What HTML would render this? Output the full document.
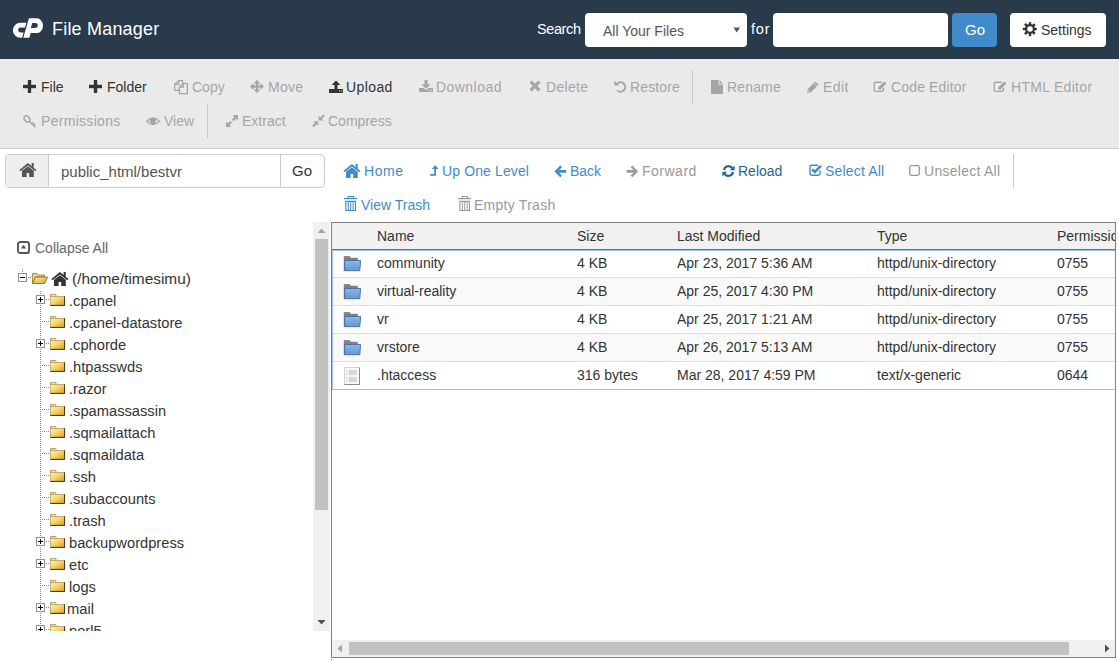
<!DOCTYPE html>
<html><head><meta charset="utf-8">
<style>
html,body{margin:0;padding:0;width:1119px;height:661px;overflow:hidden;background:#fff;font-family:"Liberation Sans",sans-serif;}
.a{position:absolute;white-space:nowrap;line-height:1;}
#hdr{position:absolute;left:0;top:0;width:1119px;height:59px;background:#293a4a;}
#tb{position:absolute;left:0;top:59px;width:1119px;height:89px;background:#eaeaea;border-bottom:1px solid #c6cbd0;}
.t{position:absolute;white-space:nowrap;line-height:1;font-size:14px;}
.dk{color:#333;}
.ds{color:#a5a5a5;}
.bl{color:#428bca;}
svg{position:absolute;overflow:visible;}
.sep{position:absolute;width:1px;background:#c9c9c9;}
</style></head><body>
<!-- HEADER -->
<div id="hdr">
  <svg style="left:0;top:0" width="60" height="59" viewBox="0 0 60 59">
    <path fill="#fff" d="M26.3 22.7 L20.4 22.7 A7.55 7.55 0 0 0 20.4 37.8 L22.1 37.8 L23.6 32.4 L20.6 32.4 A2.45 2.45 0 0 1 20.6 27.5 L25 27.5 Z"/>
    <path fill="#fff" fill-rule="evenodd" d="M28.9 18.2 L36.6 18.2 A6.4 7.45 0 0 1 36.6 33.1 L30.7 33.1 L29.4 37.8 L23.3 37.8 Z M32.2 23.1 L35.4 23.1 A2.45 2.45 0 0 1 35.4 28 L30.8 28 Z"/>
  </svg>
  <div class="a" style="left:52px;top:20px;font-size:18px;color:#fff;letter-spacing:0.2px;">File Manager</div>
  <div class="a" style="left:537px;top:22px;font-size:14.5px;color:#fff;letter-spacing:-0.4px;">Search</div>
  <div class="a" style="left:585px;top:13px;width:162px;height:34px;background:#fff;border-radius:4px;"></div>
  <div class="a" style="left:603px;top:24px;font-size:14px;color:#555;">All Your Files</div>
  <svg style="left:733px;top:27px" width="8" height="6"><path d="M0.5 0.5 L7 0.5 L3.75 5.5 Z" fill="#555"/></svg>
  <div class="a" style="left:751px;top:22px;font-size:14.5px;color:#fff;letter-spacing:0.8px;">for</div>
  <div class="a" style="left:773px;top:13px;width:175px;height:34px;background:#fff;border-radius:4px;"></div>
  <div class="a" style="left:952px;top:13px;width:45px;height:34px;background:#428bca;border-radius:4px;"></div>
  <div class="a" style="left:965px;top:21.5px;font-size:15px;color:#fff;">Go</div>
  <div class="a" style="left:1010px;top:13px;width:96px;height:34px;background:#fff;border-radius:4px;"></div>
  <svg style="left:1023px;top:22px" width="14" height="14" viewBox="0 0 14 14"><g fill="#333"><rect x="5.8" y="0.2" width="2.4" height="14" transform="rotate(0 7 7)"/><rect x="5.8" y="0.2" width="2.4" height="14" transform="rotate(45 7 7)"/><rect x="5.8" y="0.2" width="2.4" height="14" transform="rotate(90 7 7)"/><rect x="5.8" y="0.2" width="2.4" height="14" transform="rotate(135 7 7)"/><circle cx="7" cy="7" r="5"/></g><circle cx="7" cy="7" r="2.8" fill="#fff"/></svg>
  <div class="a" style="left:1041px;top:22.5px;font-size:14px;color:#333;">Settings</div>
</div>
<!-- TOOLBAR -->
<div id="tb"></div>
<div class="sep" style="left:692px;top:70px;height:34px;"></div>
<div class="sep" style="left:207px;top:104px;height:34px;"></div>
<svg style="left:23px;top:80px" width="13" height="13" viewBox="0 0 13 13"><g fill="#333"><rect x="4.8" y="0" width="3.4" height="13"/><rect x="0" y="4.8" width="13" height="3.4"/></g></svg>
<div class="t dk" style="left:41px;top:80px;font-size:14px">File</div>
<svg style="left:89px;top:80px" width="13" height="13" viewBox="0 0 13 13"><g fill="#333"><rect x="4.8" y="0" width="3.4" height="13"/><rect x="0" y="4.8" width="13" height="3.4"/></g></svg>
<div class="t dk" style="left:107px;top:80px;font-size:14px">Folder</div>
<svg style="left:174px;top:80px" width="14" height="14" viewBox="0 0 14 14"><g fill="none" stroke="#a5a5a5" stroke-width="1.25" stroke-linejoin="round"><path d="M5 10.3 L0.6 10.3 L0.6 4.4 L4.6 0.6 L8.5 0.6 L8.5 3.2"/><path d="M0.6 4.4 L4.6 4.4 L4.6 0.6"/><path d="M5.4 7.2 L9.4 3.3 L13.4 3.3 L13.4 13.5 L5.4 13.5 Z"/><path d="M5.4 7.2 L9.4 7.2 L9.4 3.3"/></g></svg>
<div class="t ds" style="left:192px;top:80px;font-size:14px">Copy</div>
<svg style="left:250px;top:80px" width="14" height="13" viewBox="0 0 14 13"><g fill="#a5a5a5"><rect x="5.8" y="2" width="2.4" height="9"/><rect x="2" y="5.3" width="10" height="2.4"/><path d="M7 0 L3.6 3.4 L10.4 3.4Z M7 13 L3.6 9.6 L10.4 9.6Z M0 6.5 L3.4 3.1 L3.4 9.9Z M14 6.5 L10.6 3.1 L10.6 9.9Z"/></g></svg>
<div class="t ds" style="left:268px;top:80px;font-size:14px;letter-spacing:0.3px">Move</div>
<svg style="left:329px;top:80px" width="14" height="13" viewBox="0 0 14 13"><g fill="#333"><path d="M7 0.5 L2.6 5 L5.5 5 L5.5 9.5 L8.5 9.5 L8.5 5 L11.4 5Z"/><rect x="0" y="9" width="14" height="4"/></g><rect x="10" y="10.5" width="1.2" height="1" fill="#eaeaea"/><rect x="12" y="10.5" width="1.2" height="1" fill="#eaeaea"/></svg>
<div class="t dk" style="left:346px;top:80px;font-size:14px;letter-spacing:0.4px">Upload</div>
<svg style="left:419px;top:80px" width="14" height="12" viewBox="0 0 14 12"><g fill="#a5a5a5"><path d="M5.5 0 L8.5 0 L8.5 4.3 L11.6 4.3 L7 8.8 L2.4 4.3 L5.5 4.3Z"/><path d="M0 8 L4.5 8 L7 10.3 L9.5 8 L14 8 L14 12 L0 12Z"/></g><rect x="9.8" y="9.8" width="1.2" height="1" fill="#eaeaea"/><rect x="11.8" y="9.8" width="1.2" height="1" fill="#eaeaea"/></svg>
<div class="t ds" style="left:436px;top:80px;font-size:14px;letter-spacing:0.45px">Download</div>
<svg style="left:529px;top:80px" width="12" height="12" viewBox="0 0 12 12"><g stroke="#a5a5a5" stroke-width="3.2"><path d="M1.6 1.6 L10.4 10.4 M10.4 1.6 L1.6 10.4"/></g></svg>
<div class="t ds" style="left:546px;top:80px;font-size:14px;letter-spacing:0.3px">Delete</div>
<svg style="left:614px;top:80px" width="13" height="13" viewBox="0 0 13 13"><path d="M3.2 3.6 A4.7 4.7 0 1 1 3.2 10.4" fill="none" stroke="#a5a5a5" stroke-width="2"/><path d="M0.4 0.8 L0.4 5.6 L5.2 5.6Z" fill="#a5a5a5"/></svg>
<div class="t ds" style="left:630px;top:80px;font-size:14px;letter-spacing:0.12px">Restore</div>
<svg style="left:711px;top:80px" width="12" height="14" viewBox="0 0 12 14"><g fill="#a5a5a5"><path d="M0 0 L7.6 0 L7.6 4.6 L12 4.6 L12 14 L0 14Z"/><path d="M8.6 0 L12 3.5 L8.6 3.5Z"/></g></svg>
<div class="t ds" style="left:727px;top:80px;font-size:14px;letter-spacing:0.15px">Rename</div>
<svg style="left:807px;top:81px" width="12" height="12" viewBox="0 0 12 12"><path fill="#a5a5a5" d="M0.1 12 L0.8 8.1 L8.3 0.6 L11.5 3.8 L4 11.3Z"/><path d="M6.9 2.0 L10.1 5.2" stroke="#eaeaea" stroke-width="0.8"/><path d="M1.2 10.8 L2 9" stroke="#eaeaea" stroke-width="0.7"/></svg>
<div class="t ds" style="left:823px;top:80px;font-size:14px;letter-spacing:0.4px">Edit</div>
<svg style="left:873px;top:81px" width="14" height="11" viewBox="0 0 14 11"><path d="M8.5 1.2 H3 Q1.2 1.2 1.2 3 V8.6 Q1.2 10.4 3 10.4 H8.6 Q10.4 10.4 10.4 8.6 V7" fill="none" stroke="#a5a5a5" stroke-width="1.4"/><path fill="#a5a5a5" d="M5 8.2 L5.4 6.2 L11.2 0.4 L13.4 2.6 L7.6 8.4Z"/></svg>
<div class="t ds" style="left:891px;top:80px;font-size:14px;letter-spacing:0.15px">Code Editor</div>
<svg style="left:993px;top:81px" width="14" height="11" viewBox="0 0 14 11"><path d="M8.5 1.2 H3 Q1.2 1.2 1.2 3 V8.6 Q1.2 10.4 3 10.4 H8.6 Q10.4 10.4 10.4 8.6 V7" fill="none" stroke="#a5a5a5" stroke-width="1.4"/><path fill="#a5a5a5" d="M5 8.2 L5.4 6.2 L11.2 0.4 L13.4 2.6 L7.6 8.4Z"/></svg>
<div class="t ds" style="left:1011px;top:80px;font-size:14px;letter-spacing:0.3px">HTML Editor</div>
<svg style="left:23px;top:115px" width="14" height="13" viewBox="0 0 14 13"><g fill="none" stroke="#a5a5a5" stroke-width="1.5"><ellipse cx="3.9" cy="3.9" rx="3.3" ry="2.5" transform="rotate(45 3.9 3.9)"/><path d="M5.9 6 L12.4 12.2 M9 9.1 L10.8 7.3 M10.6 10.6 L12.2 9"/></g></svg>
<div class="t ds" style="left:41px;top:114px;font-size:14px;letter-spacing:0.3px">Permissions</div>
<svg style="left:146px;top:116px" width="15" height="10" viewBox="0 0 15 10"><path d="M0.7 5.4 Q7.1 -1.4 13.6 5.4 Q7.1 11.6 0.7 5.4Z" fill="none" stroke="#a5a5a5" stroke-width="1.3"/><circle cx="6.9" cy="5" r="3" fill="#a5a5a5"/></svg>
<div class="t ds" style="left:164px;top:114px;font-size:14px">View</div>
<svg style="left:225px;top:114px" width="14" height="14" viewBox="0 0 14 14"><g fill="#a5a5a5"><path d="M7.6 1 L13 1 L13 6.4Z M1 7.6 L1 13 L6.4 13Z"/></g><g stroke="#a5a5a5" stroke-width="2.2"><path d="M10.6 3.4 L7.6 6.4 M3.4 10.6 L6.2 7.8"/></g></svg>
<div class="t ds" style="left:242px;top:114px;font-size:14px">Extract</div>
<svg style="left:312px;top:114px" width="14" height="14" viewBox="0 0 14 14"><g fill="#a5a5a5"><path d="M6.6 6.6 L6.6 1.8 L11.4 6.6Z M6.2 7.2 L1.4 7.2 L6.2 12Z"/></g><g stroke="#a5a5a5" stroke-width="2.2"><path d="M8.4 4.8 L12 1.2 M4.4 9 L1 12.4"/></g></svg>
<div class="t ds" style="left:328px;top:114px;font-size:14px">Compress</div>
<!-- NAV -->
<div class="a" style="left:5px;top:154px;width:318px;height:32px;border:1px solid #ccc;border-radius:4px;background:#fff;"></div>
<div class="a" style="left:6px;top:155px;width:42px;height:32px;background:#eee;border-right:1px solid #ccc;border-radius:3px 0 0 3px;"></div>
<div class="a" style="left:280px;top:155px;width:1px;height:32px;background:#ccc;"></div>
<svg style="left:19px;top:163px" width="18" height="14" viewBox="0 0 18 14"><polyline points="0.9,7.6 8.9,1.2 16.9,7.6" fill="none" stroke="#555" stroke-width="1.8"/><rect x="12.6" y="0" width="2.1" height="4.6" fill="#555"/><path fill="#555" d="M3 7.8 L8.9 3.2 L14.8 7.8 L14.8 13.9 L10.2 13.9 L10.2 9.9 L7.6 9.9 L7.6 13.9 L3 13.9 Z"/></svg>
<div class="t" style="left:61px;top:164px;font-size:15px;color:#555;">public_html/bestvr</div>
<div class="t" style="left:292px;top:163px;font-size:15px;color:#333;">Go</div>
<svg style="left:343px;top:164px" width="18" height="14" viewBox="0 0 18 14"><polyline points="0.9,7.6 8.9,1.2 16.9,7.6" fill="none" stroke="#428bca" stroke-width="1.8"/><rect x="12.6" y="0" width="2.1" height="4.6" fill="#428bca"/><path fill="#428bca" d="M3 7.8 L8.9 3.2 L14.8 7.8 L14.8 13.9 L10.2 13.9 L10.2 9.9 L7.6 9.9 L7.6 13.9 L3 13.9 Z"/></svg>
<div class="t" style="left:364px;top:164px;font-size:14px;color:#428bca;letter-spacing:0.6px;">Home</div>
<svg style="left:430px;top:165px" width="9" height="11" viewBox="0 0 9 11"><path fill="#428bca" d="M5.15 0 L8.4 4 L6 4 L6 10.8 L0.2 10.8 L0.2 9.1 L4.3 9.1 L4.3 4 L1.9 4Z"/></svg>
<div class="t" style="left:442px;top:164px;font-size:14px;color:#428bca;letter-spacing:0.12px;">Up One Level</div>
<svg style="left:554px;top:165px" width="13" height="13" viewBox="0 0 13 13"><path fill="#428bca" d="M0.5 6.4 L6.2 0.5 L8.0 2.3 L4.9 5.1 L12.1 5.1 L12.1 7.7 L4.9 7.7 L8.0 10.5 L6.2 12.3Z"/></svg>
<div class="t" style="left:570px;top:164px;font-size:14px;color:#428bca;">Back</div>
<svg style="left:626px;top:165px" width="13" height="13" viewBox="0 0 13 13"><path fill="#999" d="M12.1 6.4 L6.4 0.5 L4.6 2.3 L7.7 5.1 L0.5 5.1 L0.5 7.7 L7.7 7.7 L4.6 10.5 L6.4 12.3Z"/></svg>
<div class="t" style="left:642px;top:164px;font-size:14px;color:#999;letter-spacing:0.5px;">Forward</div>
<svg style="left:722px;top:165px" width="13" height="12" viewBox="0 0 13 12"><g fill="none" stroke="#2a6496" stroke-width="2.2"><path d="M2 5 A4.6 4.6 0 0 1 10.4 3.2"/><path d="M11 7 A4.6 4.6 0 0 1 2.6 8.8"/></g><path fill="#2a6496" d="M12.6 0.4 L12.6 5.2 L7.8 5.2Z M0.4 11.6 L0.4 6.8 L5.2 6.8Z"/></svg>
<div class="t" style="left:738px;top:164px;font-size:14px;color:#2a6496;">Reload</div>
<svg style="left:809px;top:164px" width="13" height="12" viewBox="0 0 13 12"><path d="M9 1.2 H2.6 Q1 1.2 1 2.8 V9.6 Q1 11.2 2.6 11.2 H9.4 Q11 11.2 11 9.6 V6.5" fill="none" stroke="#428bca" stroke-width="1.4"/><path fill="none" stroke="#428bca" stroke-width="2.6" d="M3.2 5.4 L5.8 8 L11.9 1.9"/></svg>
<div class="t" style="left:825px;top:164px;font-size:14px;color:#428bca;letter-spacing:0.18px;">Select All</div>
<svg style="left:909px;top:165px" width="11" height="11" viewBox="0 0 11 11"><rect x="0.7" y="0.7" width="9.6" height="9.6" rx="1.8" fill="none" stroke="#999" stroke-width="1.3"/></svg>
<div class="t" style="left:924px;top:164px;font-size:14px;color:#999;letter-spacing:0.27px;">Unselect All</div>
<div class="sep" style="left:1013px;top:154px;height:34px;background:#cbcbcb"></div>
<svg style="left:344px;top:196px" width="13" height="15" viewBox="0 0 13 15"><g fill="#428bca"><rect x="0" y="2" width="13" height="1.2"/><path fill-rule="evenodd" d="M3.6 0 H10.2 V2.2 H3.6Z M4.7 0.9 V2.2 H9.1 V0.9Z"/><path fill-rule="evenodd" d="M1.3 4.8 H12 V15 H1.3Z M2.4 5.9 V13.9 H3.8 V5.9Z M4.8 5.9 V13.9 H6.2 V5.9Z M7.2 5.9 V13.9 H8.6 V5.9Z M9.6 5.9 V13.9 H10.9 V5.9Z"/></g></svg>
<div class="t" style="left:361px;top:198px;font-size:14px;color:#428bca;">View Trash</div>
<svg style="left:458px;top:196px" width="13" height="15" viewBox="0 0 13 15"><g fill="#999"><rect x="0" y="2" width="13" height="1.2"/><path fill-rule="evenodd" d="M3.6 0 H10.2 V2.2 H3.6Z M4.7 0.9 V2.2 H9.1 V0.9Z"/><path fill-rule="evenodd" d="M1.3 4.8 H12 V15 H1.3Z M2.4 5.9 V13.9 H3.8 V5.9Z M4.8 5.9 V13.9 H6.2 V5.9Z M7.2 5.9 V13.9 H8.6 V5.9Z M9.6 5.9 V13.9 H10.9 V5.9Z"/></g></svg>
<div class="t" style="left:474px;top:198px;font-size:14px;color:#999;letter-spacing:0.26px;">Empty Trash</div>
<!-- TREE -->
<div id="tree" style="position:absolute;left:0;top:222px;width:313px;height:409px;overflow:hidden;">
<svg style="left:17px;top:19px" width="13" height="13" viewBox="0 0 13 13"><rect x="0.95" y="0.95" width="11.1" height="11.1" rx="2.4" fill="none" stroke="#555" stroke-width="1.9"/><path d="M6.5 3.8 L9.2 7.6 L3.8 7.6Z" fill="#555"/></svg>
<div class="t" style="left:35px;top:19px;font-size:14px;color:#666;">Collapse All</div>
<div class="a" style="left:22px;top:47px;width:1px;height:3px;background-image:repeating-linear-gradient(to bottom, #888 0 1px, transparent 1px 2px);"></div>
<svg style="left:18px;top:51px" width="9" height="9" viewBox="0 0 9 9"><rect x="0.5" y="0.5" width="8" height="8" fill="#fff" stroke="#909090"/><rect x="2" y="4" width="5" height="1" fill="#000"/></svg>
<div class="a" style="left:28px;top:55px;width:4px;height:1px;background-image:repeating-linear-gradient(to right, #888 0 1px, transparent 1px 2px);"></div>
<svg style="left:32px;top:50px" width="16" height="12" viewBox="0 0 16 12"><defs><linearGradient id="fo" x1="0" y1="0" x2="1" y2="1"><stop offset="0" stop-color="#fbe9a3"/><stop offset="1" stop-color="#e2a93a"/></linearGradient></defs><path d="M0.5 1.5 L5 1.5 L6.2 3 L12.5 3 L12.5 5 L3.5 5 L0.5 11.5Z" fill="#f3d37c" stroke="#9a7b3a" stroke-width="0.8"/><path d="M3.5 5 L15.5 5 L12.5 11.5 L0.5 11.5Z" fill="url(#fo)" stroke="#7a5a20" stroke-width="0.8"/></svg>
<svg style="left:51px;top:50px" width="18" height="14" viewBox="0 0 18 14"><polyline points="0.9,7.6 8.9,1.2 16.9,7.6" fill="none" stroke="#333" stroke-width="1.8"/><rect x="12.6" y="0" width="2.1" height="4.6" fill="#333"/><path fill="#333" d="M3 7.8 L8.9 3.2 L14.8 7.8 L14.8 13.9 L10.2 13.9 L10.2 9.9 L7.6 9.9 L7.6 13.9 L3 13.9 Z"/></svg>
<div class="t" style="left:72px;top:49px;font-size:15.4px;color:#333;">(/home/timesimu)</div>
<div class="a" style="left:40px;top:69px;width:1px;height:345px;background-image:repeating-linear-gradient(to bottom, #888 0 1px, transparent 1px 2px);"></div>
<svg style="left:36px;top:73px" width="9" height="9" viewBox="0 0 9 9"><rect x="0.5" y="0.5" width="8" height="8" fill="#fff" stroke="#909090"/><rect x="2" y="4" width="5" height="1" fill="#000"/><rect x="4" y="2" width="1" height="5" fill="#000"/></svg>
<div class="a" style="left:46px;top:77px;width:3px;height:1px;background-image:repeating-linear-gradient(to right, #888 0 1px, transparent 1px 2px);"></div>
<svg style="left:50px;top:72px" width="15" height="12" viewBox="0 0 15 12"><defs><linearGradient id="fc" x1="0" y1="0" x2="1" y2="1"><stop offset="0" stop-color="#fff6c4"/><stop offset="0.45" stop-color="#f5d568"/><stop offset="1" stop-color="#e0981f"/></linearGradient></defs><path d="M0.5 2.5 L0.5 0.5 L5.5 0.5 L6.5 2.2 L6.5 2.5Z" fill="#f3dd8e" stroke="#a88f4c" stroke-width="0.8"/><rect x="0.4" y="2.4" width="14.2" height="9.2" fill="url(#fc)" stroke="#b8a060" stroke-width="0.8"/><path d="M0.4 11.4 L14.6 11.4 L14.6 2.4" fill="none" stroke="#3f3210" stroke-width="1"/></svg>
<div class="t" style="left:69px;top:72px;font-size:14.7px;color:#333;">.cpanel</div>
<div class="a" style="left:42px;top:99px;width:7px;height:1px;background-image:repeating-linear-gradient(to right, #888 0 1px, transparent 1px 2px);"></div>
<svg style="left:50px;top:94px" width="15" height="12" viewBox="0 0 15 12"><defs><linearGradient id="fc" x1="0" y1="0" x2="1" y2="1"><stop offset="0" stop-color="#fff6c4"/><stop offset="0.45" stop-color="#f5d568"/><stop offset="1" stop-color="#e0981f"/></linearGradient></defs><path d="M0.5 2.5 L0.5 0.5 L5.5 0.5 L6.5 2.2 L6.5 2.5Z" fill="#f3dd8e" stroke="#a88f4c" stroke-width="0.8"/><rect x="0.4" y="2.4" width="14.2" height="9.2" fill="url(#fc)" stroke="#b8a060" stroke-width="0.8"/><path d="M0.4 11.4 L14.6 11.4 L14.6 2.4" fill="none" stroke="#3f3210" stroke-width="1"/></svg>
<div class="t" style="left:69px;top:94px;font-size:14.7px;color:#333;">.cpanel-datastore</div>
<svg style="left:36px;top:117px" width="9" height="9" viewBox="0 0 9 9"><rect x="0.5" y="0.5" width="8" height="8" fill="#fff" stroke="#909090"/><rect x="2" y="4" width="5" height="1" fill="#000"/><rect x="4" y="2" width="1" height="5" fill="#000"/></svg>
<div class="a" style="left:46px;top:121px;width:3px;height:1px;background-image:repeating-linear-gradient(to right, #888 0 1px, transparent 1px 2px);"></div>
<svg style="left:50px;top:116px" width="15" height="12" viewBox="0 0 15 12"><defs><linearGradient id="fc" x1="0" y1="0" x2="1" y2="1"><stop offset="0" stop-color="#fff6c4"/><stop offset="0.45" stop-color="#f5d568"/><stop offset="1" stop-color="#e0981f"/></linearGradient></defs><path d="M0.5 2.5 L0.5 0.5 L5.5 0.5 L6.5 2.2 L6.5 2.5Z" fill="#f3dd8e" stroke="#a88f4c" stroke-width="0.8"/><rect x="0.4" y="2.4" width="14.2" height="9.2" fill="url(#fc)" stroke="#b8a060" stroke-width="0.8"/><path d="M0.4 11.4 L14.6 11.4 L14.6 2.4" fill="none" stroke="#3f3210" stroke-width="1"/></svg>
<div class="t" style="left:69px;top:116px;font-size:14.7px;color:#333;">.cphorde</div>
<div class="a" style="left:42px;top:143px;width:7px;height:1px;background-image:repeating-linear-gradient(to right, #888 0 1px, transparent 1px 2px);"></div>
<svg style="left:50px;top:138px" width="15" height="12" viewBox="0 0 15 12"><defs><linearGradient id="fc" x1="0" y1="0" x2="1" y2="1"><stop offset="0" stop-color="#fff6c4"/><stop offset="0.45" stop-color="#f5d568"/><stop offset="1" stop-color="#e0981f"/></linearGradient></defs><path d="M0.5 2.5 L0.5 0.5 L5.5 0.5 L6.5 2.2 L6.5 2.5Z" fill="#f3dd8e" stroke="#a88f4c" stroke-width="0.8"/><rect x="0.4" y="2.4" width="14.2" height="9.2" fill="url(#fc)" stroke="#b8a060" stroke-width="0.8"/><path d="M0.4 11.4 L14.6 11.4 L14.6 2.4" fill="none" stroke="#3f3210" stroke-width="1"/></svg>
<div class="t" style="left:69px;top:138px;font-size:14.7px;color:#333;">.htpasswds</div>
<div class="a" style="left:42px;top:165px;width:7px;height:1px;background-image:repeating-linear-gradient(to right, #888 0 1px, transparent 1px 2px);"></div>
<svg style="left:50px;top:160px" width="15" height="12" viewBox="0 0 15 12"><defs><linearGradient id="fc" x1="0" y1="0" x2="1" y2="1"><stop offset="0" stop-color="#fff6c4"/><stop offset="0.45" stop-color="#f5d568"/><stop offset="1" stop-color="#e0981f"/></linearGradient></defs><path d="M0.5 2.5 L0.5 0.5 L5.5 0.5 L6.5 2.2 L6.5 2.5Z" fill="#f3dd8e" stroke="#a88f4c" stroke-width="0.8"/><rect x="0.4" y="2.4" width="14.2" height="9.2" fill="url(#fc)" stroke="#b8a060" stroke-width="0.8"/><path d="M0.4 11.4 L14.6 11.4 L14.6 2.4" fill="none" stroke="#3f3210" stroke-width="1"/></svg>
<div class="t" style="left:69px;top:160px;font-size:14.7px;color:#333;">.razor</div>
<div class="a" style="left:42px;top:187px;width:7px;height:1px;background-image:repeating-linear-gradient(to right, #888 0 1px, transparent 1px 2px);"></div>
<svg style="left:50px;top:182px" width="15" height="12" viewBox="0 0 15 12"><defs><linearGradient id="fc" x1="0" y1="0" x2="1" y2="1"><stop offset="0" stop-color="#fff6c4"/><stop offset="0.45" stop-color="#f5d568"/><stop offset="1" stop-color="#e0981f"/></linearGradient></defs><path d="M0.5 2.5 L0.5 0.5 L5.5 0.5 L6.5 2.2 L6.5 2.5Z" fill="#f3dd8e" stroke="#a88f4c" stroke-width="0.8"/><rect x="0.4" y="2.4" width="14.2" height="9.2" fill="url(#fc)" stroke="#b8a060" stroke-width="0.8"/><path d="M0.4 11.4 L14.6 11.4 L14.6 2.4" fill="none" stroke="#3f3210" stroke-width="1"/></svg>
<div class="t" style="left:69px;top:182px;font-size:14.7px;color:#333;">.spamassassin</div>
<div class="a" style="left:42px;top:209px;width:7px;height:1px;background-image:repeating-linear-gradient(to right, #888 0 1px, transparent 1px 2px);"></div>
<svg style="left:50px;top:204px" width="15" height="12" viewBox="0 0 15 12"><defs><linearGradient id="fc" x1="0" y1="0" x2="1" y2="1"><stop offset="0" stop-color="#fff6c4"/><stop offset="0.45" stop-color="#f5d568"/><stop offset="1" stop-color="#e0981f"/></linearGradient></defs><path d="M0.5 2.5 L0.5 0.5 L5.5 0.5 L6.5 2.2 L6.5 2.5Z" fill="#f3dd8e" stroke="#a88f4c" stroke-width="0.8"/><rect x="0.4" y="2.4" width="14.2" height="9.2" fill="url(#fc)" stroke="#b8a060" stroke-width="0.8"/><path d="M0.4 11.4 L14.6 11.4 L14.6 2.4" fill="none" stroke="#3f3210" stroke-width="1"/></svg>
<div class="t" style="left:69px;top:204px;font-size:14.7px;color:#333;">.sqmailattach</div>
<div class="a" style="left:42px;top:231px;width:7px;height:1px;background-image:repeating-linear-gradient(to right, #888 0 1px, transparent 1px 2px);"></div>
<svg style="left:50px;top:226px" width="15" height="12" viewBox="0 0 15 12"><defs><linearGradient id="fc" x1="0" y1="0" x2="1" y2="1"><stop offset="0" stop-color="#fff6c4"/><stop offset="0.45" stop-color="#f5d568"/><stop offset="1" stop-color="#e0981f"/></linearGradient></defs><path d="M0.5 2.5 L0.5 0.5 L5.5 0.5 L6.5 2.2 L6.5 2.5Z" fill="#f3dd8e" stroke="#a88f4c" stroke-width="0.8"/><rect x="0.4" y="2.4" width="14.2" height="9.2" fill="url(#fc)" stroke="#b8a060" stroke-width="0.8"/><path d="M0.4 11.4 L14.6 11.4 L14.6 2.4" fill="none" stroke="#3f3210" stroke-width="1"/></svg>
<div class="t" style="left:69px;top:226px;font-size:14.7px;color:#333;">.sqmaildata</div>
<div class="a" style="left:42px;top:253px;width:7px;height:1px;background-image:repeating-linear-gradient(to right, #888 0 1px, transparent 1px 2px);"></div>
<svg style="left:50px;top:248px" width="15" height="12" viewBox="0 0 15 12"><defs><linearGradient id="fc" x1="0" y1="0" x2="1" y2="1"><stop offset="0" stop-color="#fff6c4"/><stop offset="0.45" stop-color="#f5d568"/><stop offset="1" stop-color="#e0981f"/></linearGradient></defs><path d="M0.5 2.5 L0.5 0.5 L5.5 0.5 L6.5 2.2 L6.5 2.5Z" fill="#f3dd8e" stroke="#a88f4c" stroke-width="0.8"/><rect x="0.4" y="2.4" width="14.2" height="9.2" fill="url(#fc)" stroke="#b8a060" stroke-width="0.8"/><path d="M0.4 11.4 L14.6 11.4 L14.6 2.4" fill="none" stroke="#3f3210" stroke-width="1"/></svg>
<div class="t" style="left:69px;top:248px;font-size:14.7px;color:#333;">.ssh</div>
<div class="a" style="left:42px;top:275px;width:7px;height:1px;background-image:repeating-linear-gradient(to right, #888 0 1px, transparent 1px 2px);"></div>
<svg style="left:50px;top:270px" width="15" height="12" viewBox="0 0 15 12"><defs><linearGradient id="fc" x1="0" y1="0" x2="1" y2="1"><stop offset="0" stop-color="#fff6c4"/><stop offset="0.45" stop-color="#f5d568"/><stop offset="1" stop-color="#e0981f"/></linearGradient></defs><path d="M0.5 2.5 L0.5 0.5 L5.5 0.5 L6.5 2.2 L6.5 2.5Z" fill="#f3dd8e" stroke="#a88f4c" stroke-width="0.8"/><rect x="0.4" y="2.4" width="14.2" height="9.2" fill="url(#fc)" stroke="#b8a060" stroke-width="0.8"/><path d="M0.4 11.4 L14.6 11.4 L14.6 2.4" fill="none" stroke="#3f3210" stroke-width="1"/></svg>
<div class="t" style="left:69px;top:270px;font-size:14.7px;color:#333;">.subaccounts</div>
<div class="a" style="left:42px;top:297px;width:7px;height:1px;background-image:repeating-linear-gradient(to right, #888 0 1px, transparent 1px 2px);"></div>
<svg style="left:50px;top:292px" width="15" height="12" viewBox="0 0 15 12"><defs><linearGradient id="fc" x1="0" y1="0" x2="1" y2="1"><stop offset="0" stop-color="#fff6c4"/><stop offset="0.45" stop-color="#f5d568"/><stop offset="1" stop-color="#e0981f"/></linearGradient></defs><path d="M0.5 2.5 L0.5 0.5 L5.5 0.5 L6.5 2.2 L6.5 2.5Z" fill="#f3dd8e" stroke="#a88f4c" stroke-width="0.8"/><rect x="0.4" y="2.4" width="14.2" height="9.2" fill="url(#fc)" stroke="#b8a060" stroke-width="0.8"/><path d="M0.4 11.4 L14.6 11.4 L14.6 2.4" fill="none" stroke="#3f3210" stroke-width="1"/></svg>
<div class="t" style="left:69px;top:292px;font-size:14.7px;color:#333;">.trash</div>
<svg style="left:36px;top:315px" width="9" height="9" viewBox="0 0 9 9"><rect x="0.5" y="0.5" width="8" height="8" fill="#fff" stroke="#909090"/><rect x="2" y="4" width="5" height="1" fill="#000"/><rect x="4" y="2" width="1" height="5" fill="#000"/></svg>
<div class="a" style="left:46px;top:319px;width:3px;height:1px;background-image:repeating-linear-gradient(to right, #888 0 1px, transparent 1px 2px);"></div>
<svg style="left:50px;top:314px" width="15" height="12" viewBox="0 0 15 12"><defs><linearGradient id="fc" x1="0" y1="0" x2="1" y2="1"><stop offset="0" stop-color="#fff6c4"/><stop offset="0.45" stop-color="#f5d568"/><stop offset="1" stop-color="#e0981f"/></linearGradient></defs><path d="M0.5 2.5 L0.5 0.5 L5.5 0.5 L6.5 2.2 L6.5 2.5Z" fill="#f3dd8e" stroke="#a88f4c" stroke-width="0.8"/><rect x="0.4" y="2.4" width="14.2" height="9.2" fill="url(#fc)" stroke="#b8a060" stroke-width="0.8"/><path d="M0.4 11.4 L14.6 11.4 L14.6 2.4" fill="none" stroke="#3f3210" stroke-width="1"/></svg>
<div class="t" style="left:69px;top:314px;font-size:14.7px;color:#333;">backupwordpress</div>
<svg style="left:36px;top:337px" width="9" height="9" viewBox="0 0 9 9"><rect x="0.5" y="0.5" width="8" height="8" fill="#fff" stroke="#909090"/><rect x="2" y="4" width="5" height="1" fill="#000"/><rect x="4" y="2" width="1" height="5" fill="#000"/></svg>
<div class="a" style="left:46px;top:341px;width:3px;height:1px;background-image:repeating-linear-gradient(to right, #888 0 1px, transparent 1px 2px);"></div>
<svg style="left:50px;top:336px" width="15" height="12" viewBox="0 0 15 12"><defs><linearGradient id="fc" x1="0" y1="0" x2="1" y2="1"><stop offset="0" stop-color="#fff6c4"/><stop offset="0.45" stop-color="#f5d568"/><stop offset="1" stop-color="#e0981f"/></linearGradient></defs><path d="M0.5 2.5 L0.5 0.5 L5.5 0.5 L6.5 2.2 L6.5 2.5Z" fill="#f3dd8e" stroke="#a88f4c" stroke-width="0.8"/><rect x="0.4" y="2.4" width="14.2" height="9.2" fill="url(#fc)" stroke="#b8a060" stroke-width="0.8"/><path d="M0.4 11.4 L14.6 11.4 L14.6 2.4" fill="none" stroke="#3f3210" stroke-width="1"/></svg>
<div class="t" style="left:69px;top:336px;font-size:14.7px;color:#333;">etc</div>
<div class="a" style="left:42px;top:363px;width:7px;height:1px;background-image:repeating-linear-gradient(to right, #888 0 1px, transparent 1px 2px);"></div>
<svg style="left:50px;top:358px" width="15" height="12" viewBox="0 0 15 12"><defs><linearGradient id="fc" x1="0" y1="0" x2="1" y2="1"><stop offset="0" stop-color="#fff6c4"/><stop offset="0.45" stop-color="#f5d568"/><stop offset="1" stop-color="#e0981f"/></linearGradient></defs><path d="M0.5 2.5 L0.5 0.5 L5.5 0.5 L6.5 2.2 L6.5 2.5Z" fill="#f3dd8e" stroke="#a88f4c" stroke-width="0.8"/><rect x="0.4" y="2.4" width="14.2" height="9.2" fill="url(#fc)" stroke="#b8a060" stroke-width="0.8"/><path d="M0.4 11.4 L14.6 11.4 L14.6 2.4" fill="none" stroke="#3f3210" stroke-width="1"/></svg>
<div class="t" style="left:69px;top:358px;font-size:14.7px;color:#333;">logs</div>
<svg style="left:36px;top:381px" width="9" height="9" viewBox="0 0 9 9"><rect x="0.5" y="0.5" width="8" height="8" fill="#fff" stroke="#909090"/><rect x="2" y="4" width="5" height="1" fill="#000"/><rect x="4" y="2" width="1" height="5" fill="#000"/></svg>
<div class="a" style="left:46px;top:385px;width:3px;height:1px;background-image:repeating-linear-gradient(to right, #888 0 1px, transparent 1px 2px);"></div>
<svg style="left:50px;top:380px" width="15" height="12" viewBox="0 0 15 12"><defs><linearGradient id="fc" x1="0" y1="0" x2="1" y2="1"><stop offset="0" stop-color="#fff6c4"/><stop offset="0.45" stop-color="#f5d568"/><stop offset="1" stop-color="#e0981f"/></linearGradient></defs><path d="M0.5 2.5 L0.5 0.5 L5.5 0.5 L6.5 2.2 L6.5 2.5Z" fill="#f3dd8e" stroke="#a88f4c" stroke-width="0.8"/><rect x="0.4" y="2.4" width="14.2" height="9.2" fill="url(#fc)" stroke="#b8a060" stroke-width="0.8"/><path d="M0.4 11.4 L14.6 11.4 L14.6 2.4" fill="none" stroke="#3f3210" stroke-width="1"/></svg>
<div class="t" style="left:67px;top:380px;font-size:14.7px;color:#333;">mail</div>
<svg style="left:36px;top:403px" width="9" height="9" viewBox="0 0 9 9"><rect x="0.5" y="0.5" width="8" height="8" fill="#fff" stroke="#909090"/><rect x="2" y="4" width="5" height="1" fill="#000"/><rect x="4" y="2" width="1" height="5" fill="#000"/></svg>
<div class="a" style="left:46px;top:407px;width:3px;height:1px;background-image:repeating-linear-gradient(to right, #888 0 1px, transparent 1px 2px);"></div>
<svg style="left:50px;top:402px" width="15" height="12" viewBox="0 0 15 12"><defs><linearGradient id="fc" x1="0" y1="0" x2="1" y2="1"><stop offset="0" stop-color="#fff6c4"/><stop offset="0.45" stop-color="#f5d568"/><stop offset="1" stop-color="#e0981f"/></linearGradient></defs><path d="M0.5 2.5 L0.5 0.5 L5.5 0.5 L6.5 2.2 L6.5 2.5Z" fill="#f3dd8e" stroke="#a88f4c" stroke-width="0.8"/><rect x="0.4" y="2.4" width="14.2" height="9.2" fill="url(#fc)" stroke="#b8a060" stroke-width="0.8"/><path d="M0.4 11.4 L14.6 11.4 L14.6 2.4" fill="none" stroke="#3f3210" stroke-width="1"/></svg>
<div class="t" style="left:69px;top:402px;font-size:14.7px;color:#333;">perl5</div>
</div>
<div class="a" style="left:313px;top:222px;width:17px;height:409px;background:#f0f0f0;"></div>
<div class="a" style="left:315px;top:239px;width:13px;height:271px;background:#c1c1c1;"></div>
<svg style="left:317px;top:228px" width="9" height="6" viewBox="0 0 9 6"><path d="M4.5 0.5 L8.5 5 L0.5 5Z" fill="#a3a3a3"/></svg>
<svg style="left:317px;top:619px" width="9" height="6" viewBox="0 0 9 6"><path d="M4.5 5.5 L8.5 1 L0.5 1Z" fill="#505050"/></svg>
<!-- TABLE -->
<div class="a" style="left:331px;top:222px;width:783px;height:434px;border:1px solid #808080;background:#fff;overflow:hidden;">
<div class="a" style="left:0;top:0;width:783px;height:26px;background:#f1f1f1;border-bottom:1px solid #6f6f6f;"></div>
<div class="t" style="left:45px;top:6px;font-size:14px;color:#333;">Name</div>
<div class="t" style="left:245px;top:6px;font-size:14px;color:#333;">Size</div>
<div class="t" style="left:345px;top:6px;font-size:14px;color:#333;">Last Modified</div>
<div class="t" style="left:545px;top:6px;font-size:14px;color:#333;">Type</div>
<div class="t" style="left:725px;top:6px;font-size:14px;color:#333;">Permissions</div>

<div class="a" style="left:1px;top:27px;width:782px;height:27px;background:#fff;"></div>
<div class="a" style="left:1px;top:54px;width:782px;height:1px;background:#ddd;"></div>
<svg style="left:11px;top:33px" width="18" height="16" viewBox="0 0 18 16"><defs><linearGradient id="bf" x1="0" y1="0" x2="0" y2="1"><stop offset="0" stop-color="#8fb5e4"/><stop offset="1" stop-color="#6896d2"/></linearGradient><linearGradient id="bg2" x1="0" y1="0" x2="0" y2="1"><stop offset="0" stop-color="#8a8a8a"/><stop offset="1" stop-color="#5a5a5a"/></linearGradient></defs><path d="M0.8 0 L6.8 0 L7.7 1.8 L14.8 1.8 L14.8 5 L2.4 5 L2.4 14.8 L0.8 14.8Z" fill="url(#bg2)"/><path d="M1.6 4.5 L17.6 4.5 L16.8 14.7 L1.6 14.7Z" fill="url(#bf)" stroke="#3c6eb0" stroke-width="0.9" stroke-linejoin="round"/></svg>
<div class="t" style="left:45px;top:33px;font-size:14px;color:#333;">community</div>
<div class="t" style="left:245px;top:33px;font-size:14px;color:#333;">4 KB</div>
<div class="t" style="left:345px;top:33px;font-size:14px;color:#333;">Apr 23, 2017 5:36 AM</div>
<div class="t" style="left:545px;top:33px;font-size:14px;color:#333;">httpd/unix-directory</div>
<div class="t" style="left:725px;top:33px;font-size:14px;color:#333;">0755</div>
<div class="a" style="left:1px;top:55px;width:782px;height:27px;background:#f9f9f9;"></div>
<div class="a" style="left:1px;top:82px;width:782px;height:1px;background:#ddd;"></div>
<svg style="left:11px;top:61px" width="18" height="16" viewBox="0 0 18 16"><defs><linearGradient id="bf" x1="0" y1="0" x2="0" y2="1"><stop offset="0" stop-color="#8fb5e4"/><stop offset="1" stop-color="#6896d2"/></linearGradient><linearGradient id="bg2" x1="0" y1="0" x2="0" y2="1"><stop offset="0" stop-color="#8a8a8a"/><stop offset="1" stop-color="#5a5a5a"/></linearGradient></defs><path d="M0.8 0 L6.8 0 L7.7 1.8 L14.8 1.8 L14.8 5 L2.4 5 L2.4 14.8 L0.8 14.8Z" fill="url(#bg2)"/><path d="M1.6 4.5 L17.6 4.5 L16.8 14.7 L1.6 14.7Z" fill="url(#bf)" stroke="#3c6eb0" stroke-width="0.9" stroke-linejoin="round"/></svg>
<div class="t" style="left:45px;top:61px;font-size:14px;color:#333;">virtual-reality</div>
<div class="t" style="left:245px;top:61px;font-size:14px;color:#333;">4 KB</div>
<div class="t" style="left:345px;top:61px;font-size:14px;color:#333;">Apr 25, 2017 4:30 PM</div>
<div class="t" style="left:545px;top:61px;font-size:14px;color:#333;">httpd/unix-directory</div>
<div class="t" style="left:725px;top:61px;font-size:14px;color:#333;">0755</div>
<div class="a" style="left:1px;top:83px;width:782px;height:27px;background:#fff;"></div>
<div class="a" style="left:1px;top:110px;width:782px;height:1px;background:#ddd;"></div>
<svg style="left:11px;top:89px" width="18" height="16" viewBox="0 0 18 16"><defs><linearGradient id="bf" x1="0" y1="0" x2="0" y2="1"><stop offset="0" stop-color="#8fb5e4"/><stop offset="1" stop-color="#6896d2"/></linearGradient><linearGradient id="bg2" x1="0" y1="0" x2="0" y2="1"><stop offset="0" stop-color="#8a8a8a"/><stop offset="1" stop-color="#5a5a5a"/></linearGradient></defs><path d="M0.8 0 L6.8 0 L7.7 1.8 L14.8 1.8 L14.8 5 L2.4 5 L2.4 14.8 L0.8 14.8Z" fill="url(#bg2)"/><path d="M1.6 4.5 L17.6 4.5 L16.8 14.7 L1.6 14.7Z" fill="url(#bf)" stroke="#3c6eb0" stroke-width="0.9" stroke-linejoin="round"/></svg>
<div class="t" style="left:45px;top:89px;font-size:14px;color:#333;">vr</div>
<div class="t" style="left:245px;top:89px;font-size:14px;color:#333;">4 KB</div>
<div class="t" style="left:345px;top:89px;font-size:14px;color:#333;">Apr 25, 2017 1:21 AM</div>
<div class="t" style="left:545px;top:89px;font-size:14px;color:#333;">httpd/unix-directory</div>
<div class="t" style="left:725px;top:89px;font-size:14px;color:#333;">0755</div>
<div class="a" style="left:1px;top:111px;width:782px;height:27px;background:#f9f9f9;"></div>
<div class="a" style="left:1px;top:138px;width:782px;height:1px;background:#ddd;"></div>
<svg style="left:11px;top:117px" width="18" height="16" viewBox="0 0 18 16"><defs><linearGradient id="bf" x1="0" y1="0" x2="0" y2="1"><stop offset="0" stop-color="#8fb5e4"/><stop offset="1" stop-color="#6896d2"/></linearGradient><linearGradient id="bg2" x1="0" y1="0" x2="0" y2="1"><stop offset="0" stop-color="#8a8a8a"/><stop offset="1" stop-color="#5a5a5a"/></linearGradient></defs><path d="M0.8 0 L6.8 0 L7.7 1.8 L14.8 1.8 L14.8 5 L2.4 5 L2.4 14.8 L0.8 14.8Z" fill="url(#bg2)"/><path d="M1.6 4.5 L17.6 4.5 L16.8 14.7 L1.6 14.7Z" fill="url(#bf)" stroke="#3c6eb0" stroke-width="0.9" stroke-linejoin="round"/></svg>
<div class="t" style="left:45px;top:117px;font-size:14px;color:#333;">vrstore</div>
<div class="t" style="left:245px;top:117px;font-size:14px;color:#333;">4 KB</div>
<div class="t" style="left:345px;top:117px;font-size:14px;color:#333;">Apr 26, 2017 5:13 AM</div>
<div class="t" style="left:545px;top:117px;font-size:14px;color:#333;">httpd/unix-directory</div>
<div class="t" style="left:725px;top:117px;font-size:14px;color:#333;">0755</div>
<div class="a" style="left:1px;top:139px;width:782px;height:27px;background:#fff;"></div>
<svg style="left:12px;top:144px" width="17" height="19" viewBox="0 0 17 19"><rect x="0.5" y="0.5" width="15" height="17" fill="#f8f8f8" stroke="#d4d4d4"/><path d="M0.5 17.5 H15.5 V0.5" fill="none" stroke="#8c8c8c" stroke-width="1"/><g fill="#d8d8d8"><rect x="4.5" y="3" width="8.5" height="5"/><rect x="4.5" y="10" width="8.5" height="5"/></g><rect x="2" y="2" width="1" height="14" fill="#e4e4e4"/></svg>
<div class="t" style="left:45px;top:145px;font-size:14px;color:#333;">.htaccess</div>
<div class="t" style="left:245px;top:145px;font-size:14px;color:#333;">316 bytes</div>
<div class="t" style="left:345px;top:145px;font-size:14px;color:#333;">Mar 28, 2017 4:59 PM</div>
<div class="t" style="left:545px;top:145px;font-size:14px;color:#333;">text/x-generic</div>
<div class="t" style="left:725px;top:145px;font-size:14px;color:#333;">0644</div>
<div class="a" style="left:0;top:27px;width:783px;height:140px;border-top:1px solid #9ec0ea;border-bottom:1px solid #9ec0ea;border-left:1px solid #9ec0ea;box-sizing:border-box;"></div>
<div class="a" style="left:0;top:417px;width:783px;height:17px;background:#f0f0f0;"></div>
<div class="a" style="left:17px;top:419px;width:720px;height:13px;background:#c1c1c1;"></div>
<svg style="left:5px;top:421px" width="6" height="9" viewBox="0 0 6 9"><path d="M0.5 4.5 L5 0.5 L5 8.5Z" fill="#a3a3a3"/></svg>
<svg style="left:772px;top:421px" width="6" height="9" viewBox="0 0 6 9"><path d="M5.5 4.5 L1 0.5 L1 8.5Z" fill="#505050"/></svg>
</div>
<div class="a" style="left:331px;top:657px;width:1px;height:4px;background:#bbb;"></div>
</body></html>
